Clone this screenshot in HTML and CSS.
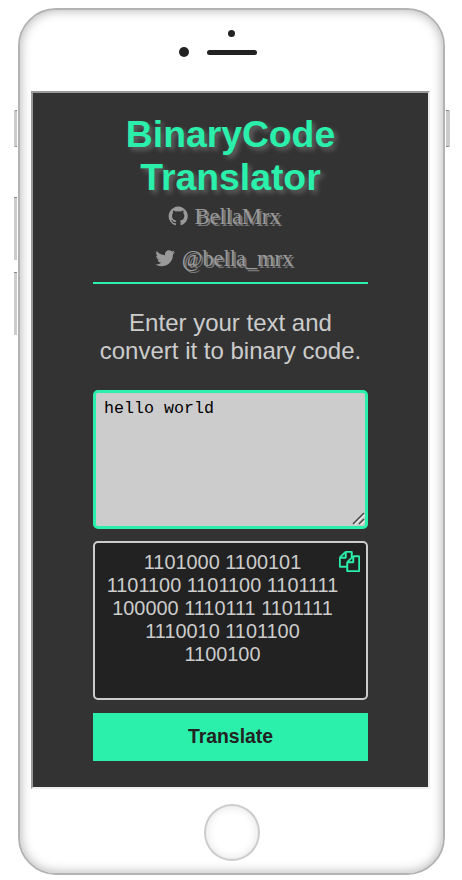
FILE: index.html
```html
<!DOCTYPE html>
<html lang="en">
<head>
<meta charset="utf-8">
<title>BinaryCode Translator</title>
<link rel="stylesheet" href="styles.css">
</head>
<body>
<div class="phone">
  <span class="key key-mute"></span>
  <span class="key key-up"></span>
  <span class="key key-down"></span>
  <span class="key key-power"></span>
  <div class="top">
    <span class="camera"></span>
    <div class="ear">
      <span class="sensor"></span>
      <span class="speaker"></span>
    </div>
  </div>
  <main class="screen">
    <h1 class="title">BinaryCode Translator</h1>
    <nav class="links">
      <a class="link"><svg class="icon" viewBox="0 0 1792 1792"><path d="M896 128q209 0 385.5 103t279.5 279.5 103 385.5q0 251-146.5 451.5t-378.5 277.5q-27 5-40-7t-13-30q0-3 .5-76.5t.5-134.5q0-97-52-142 57-6 102.5-18t94-39 81-66.5 53-105 20.5-150.5q0-119-79-206 37-91-8-204-28-9-81 11t-92 44l-38 24q-93-26-192-26t-192 26q-16-11-42.5-27t-83.5-38.5-85-13.5q-45 113-8 204-79 87-79 206 0 85 20.5 150t52.5 105 80.5 67 94 39 102.5 18q-39 36-49 103-21 10-45 15t-57 5-65.5-21.5-55.5-62.5q-19-32-48.5-52t-49.5-24l-20-3q-21 0-29 4.5t-5 11.5 9 14 13 12l7 5q22 10 43.5 38t31.5 51l10 23q13 38 44 61.5t67 30 69.5 7 55.5-3.5l23-4q0 38 .5 88.5t.5 54.5q0 18-13 30t-40 7q-232-77-378.5-277.5t-146.5-451.5q0-209 103-385.5t279.5-279.5 385.5-103z"/></svg><span>BellaMrx</span></a>
      <a class="link"><svg class="icon" viewBox="0 0 1792 1792"><path d="M1684 408q-67 98-162 167 1 14 1 42 0 130-38 259.5t-115.5 248.5-184.5 210.5-258 146-323 54.5q-271 0-496-145 35 4 78 4 225 0 401-138-105-2-188-64.5t-114-159.5q33 5 61 5 43 0 85-11-112-23-185.5-111.5t-73.5-205.5v-4q68 38 146 41-66-44-105-115t-39-154q0-88 44-163 121 149 294.5 238.5t371.5 99.5q-8-38-8-74 0-134 94.5-228.5t228.5-94.5q140 0 236 102 109-21 205-78-37 115-142 178 93-10 186-50z"/></svg><span>@bella_mrx</span></a>
    </nav>
    <p class="intro">Enter your text and convert it to binary code.</p>
    <div class="field">
      <textarea class="input" spellcheck="false">hello world</textarea>
      <svg class="grip" viewBox="0 0 13 13"><path class="grip-light" d="M2.5 12.5L12.5 2.5M8.5 12.5L12.5 8.5"/><path class="grip-dark" d="M1 12L12 1M7 12L12 7"/></svg>
    </div>
    <div class="output">
      <div class="bits">1101000 1100101<br>1101100 1101100 1101111<br>100000 1110111 1101111<br>1110010 1101100<br>1100100</div>
      <svg class="copy" viewBox="0 0 1792 1792"><path d="M1696 384q40 0 68 28t28 68v1216q0 40-28 68t-68 28h-960q-40 0-68-28t-28-68v-288h-544q-40 0-68-28t-28-68v-672q0-40 20-88t48-76l408-408q28-28 76-48t88-20h416q40 0 68 28t28 68v328q68-40 128-40h416zm-544 213l-299 299h299v-299zm-640-384l-299 299h299v-299zm196 647l316-316v-416h-384v416q0 40-28 68t-68 28h-416v640h512v-256q0-40 20-88t48-76zm956 804v-1152h-384v416q0 40-28 68t-68 28h-416v640h896z"/></svg>
    </div>
    <button class="translate">Translate</button>
  </main>
  <div class="home"></div>
</div>
</body>
</html>
```
FILE: styles.css
```css
* { box-sizing: border-box; }

body {
  margin: 0;
  background: #fff;
  font-family: "Liberation Sans", Arial, sans-serif;
}

.phone {
  position: relative;
  width: 427px;
  height: 867px;
  margin: 8px 0 0 18px;
  padding: 0 13px 0 11px;
  border: 2px solid #b3b3b3;
  border-radius: 38px;
  background: #fff;
  box-shadow: inset 0 0 12px rgba(0, 0, 0, 0.32);
}

.key {
  position: absolute;
  left: -6px;
  width: 3px;
  height: 63px;
  background: #ccc;
  border-top: 1px solid #888;
}
.key-mute { top: 100px; height: 37px; border-radius: 2px 0 0 2px; border-bottom: 1px solid #888; }
.key-up { top: 187px; }
.key-down { top: 262px; }
.key-power { top: 100px; left: 426px; width: 4px; height: 37px; border-radius: 0 2px 2px 0; border-bottom: 1px solid #888; }

.top {
  display: flex;
  flex-direction: column;
  height: 81px;
  padding: 20px 0 0 148px;
}
.camera { width: 7px; height: 7px; margin-left: 49px; border-radius: 50%; background: #222; }
.ear { display: flex; align-items: center; gap: 18px; margin-top: 10px; }
.sensor { width: 10px; height: 10px; border-radius: 50%; background: #222; }
.speaker { width: 50px; height: 5px; border-radius: 3px; background: #222; }

.screen {
  width: 399px;
  height: 698px;
  padding: 20px 60px 0;
  border: 2px inset #eee;
  background: #333;
  display: flex;
  flex-direction: column;
}

.title {
  margin: 0;
  color: #2bf0ab;
  font-size: 37.3px;
  line-height: 43px;
  text-align: center;
  text-shadow: 3px 3px 5px #666;
}

.links {
  height: 85px;
  border-bottom: 2px solid #2bf0ab;
  font-family: "Liberation Serif", "Times New Roman", serif;
  font-size: 22.4px;
}
.link {
  display: flex;
  justify-content: center;
  align-items: flex-start;
  gap: 5.6px;
  height: 42px;
  padding: 5px 14px 0 0;
  color: #999;
  line-height: 26px;
  text-shadow: 2px 2px 0 #777;
}
.icon { width: 22.4px; height: 22.4px; margin-top: 0.7px; fill: #999; }

.intro {
  margin: 25px 0;
  color: #ccc;
  font-size: 24px;
  line-height: 28px;
  text-align: center;
}

.field {
  position: relative;
  flex: none;
  height: 139px;
}
.input {
  display: block;
  width: 100%;
  height: 100%;
  margin: 0;
  padding: 6px 8px;
  border: 3px solid #2bf0ab;
  border-radius: 5px;
  outline: none;
  resize: none;
  background: #ccc;
  color: #000;
  font-family: "Liberation Mono", "Courier New", monospace;
  font-size: 16.67px;
  line-height: 19px;
}
.grip {
  position: absolute;
  right: 3px;
  bottom: 4px;
  width: 13px;
  height: 13px;
  fill: none;
  stroke-width: 1.5;
}
.grip-dark { stroke: #444; }
.grip-light { stroke: #eee; }

.output {
  display: flex;
  flex: none;
  height: 159px;
  margin: 12px 0 13px;
  padding: 7px 6px 0 11px;
  border: 2px solid #ccc;
  border-radius: 5px;
  background: #222;
  color: #ccc;
}
.bits {
  flex: 1;
  padding-top: 1px;
  font-size: 19.9px;
  line-height: 23px;
  text-align: center;
  white-space: nowrap;
}
.copy { flex: none; width: 21px; height: 21px; margin-top: 0.5px; fill: #2bf0ab; stroke: #2bf0ab; stroke-width: 40; }

.translate {
  flex: none;
  height: 48px;
  padding: 0 0 2px;
  border: 0;
  background: #2bf0ab;
  color: #222;
  font: bold 19.4px "Liberation Sans", Arial, sans-serif;
}

.home {
  width: 56px;
  height: 57px;
  margin: 15px 0 0 173px;
  border: 2px solid #ccc;
  border-radius: 50%;
  box-shadow: inset 0 0 10px rgba(0, 0, 0, 0.12);
}
```
